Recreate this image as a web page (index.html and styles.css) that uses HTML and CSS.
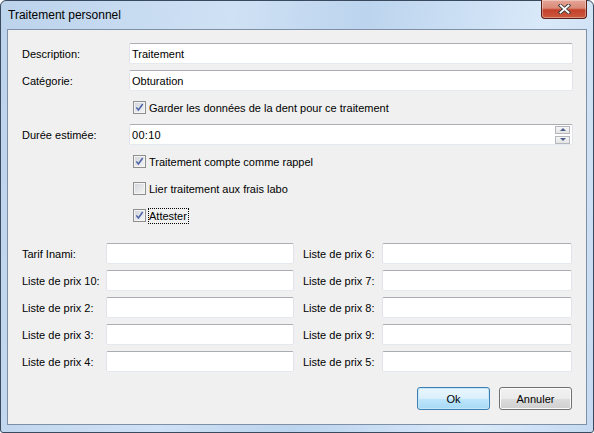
FILE: index.html
```html
<!DOCTYPE html>
<html lang="fr">
<head>
  <meta charset="UTF-8">
  <title>Traitement personnel</title>
  <link rel="stylesheet" href="styles.css">
</head>
<body>
  <div class="window">
    <div class="titlebar">
      <span class="title">Traitement personnel</span>
      <button class="close" type="button" aria-label="Fermer">
        <svg width="13" height="10" viewBox="0 0 13 10">
          <path d="M2.5 1.5 L10.5 8.5 M10.5 1.5 L2.5 8.5" stroke="#3b3b3b" stroke-width="3.6" stroke-linecap="square"/>
          <path d="M2.5 1.5 L10.5 8.5 M10.5 1.5 L2.5 8.5" stroke="#fff" stroke-width="1.8" stroke-linecap="square"/>
        </svg>
      </button>
    </div>

    <div class="client">
      <form class="form">
        <div class="main-grid">
          <label class="lbl">Description:</label>
          <input class="field" type="text" value="Traitement">

          <label class="lbl">Catégorie:</label>
          <input class="field" type="text" value="Obturation">

          <span></span>
          <label class="check"><span class="box on"></span>Garder les données de la dent pour ce traitement</label>

          <label class="lbl">Durée estimée:</label>
          <div class="spin">
            <input class="spin-input" type="text" value="00:10">
            <div class="spin-btns">
              <span class="spin-btn"><span class="arrow up"></span></span>
              <span class="spin-btn"><span class="arrow down"></span></span>
            </div>
          </div>

          <span></span>
          <label class="check"><span class="box on"></span>Traitement compte comme rappel</label>

          <span></span>
          <label class="check"><span class="box"></span>Lier traitement aux frais labo</label>

          <span></span>
          <label class="check"><span class="box on"></span><span class="focus">Attester</span></label>
        </div>

        <div class="price-grid">
          <label class="lbl">Tarif Inami:</label>
          <input class="field" type="text">
          <label class="lbl lbl-right">Liste de prix 6:</label>
          <input class="field" type="text">

          <label class="lbl">Liste de prix 10:</label>
          <input class="field" type="text">
          <label class="lbl lbl-right">Liste de prix 7:</label>
          <input class="field" type="text">

          <label class="lbl">Liste de prix 2:</label>
          <input class="field" type="text">
          <label class="lbl lbl-right">Liste de prix 8:</label>
          <input class="field" type="text">

          <label class="lbl">Liste de prix 3:</label>
          <input class="field" type="text">
          <label class="lbl lbl-right">Liste de prix 9:</label>
          <input class="field" type="text">

          <label class="lbl">Liste de prix 4:</label>
          <input class="field" type="text">
          <label class="lbl lbl-right">Liste de prix 5:</label>
          <input class="field" type="text">
        </div>

        <div class="actions">
          <button class="btn btn-default" type="submit">Ok</button>
          <button class="btn" type="button">Annuler</button>
        </div>
      </form>
    </div>
  </div>
</body>
</html>
```

FILE: styles.css
```css
body {
  margin: 0;
  background: #fff;
  font-family: "Liberation Sans", Arial, sans-serif;
  font-size: 11px;
  color: #000;
}

/* window frame */
.window {
  width: 594px;
  height: 433px;
  box-sizing: border-box;
  border: 1px solid #3a4a5e;
  border-radius: 6px 6px 3px 3px;
  background: linear-gradient(100deg, #bcd3ec 0%, #cfe1f4 35%, #bcd4ee 55%, #d9e9f9 82%, #c5daf1 100%);
  padding: 0 6px 7px 6px;
  display: flex;
  flex-direction: column;
}
.titlebar {
  height: 28px;
  display: flex;
  justify-content: space-between;
  align-items: flex-start;
}
.title {
  font-size: 12px;
  padding: 7px 0 0 1px;
  color: #000;
}
.close {
  width: 46px;
  height: 19px;
  margin: -1px 0 0 0;
  padding: 0;
  border: 1px solid #5a1f17;
  border-top: none;
  border-radius: 0 0 4px 4px;
  background: linear-gradient(#e6a597 0%, #d98a78 45%, #c4402a 55%, #cd5a3f 100%);
  box-shadow: inset 0 0 0 1px rgba(255, 255, 255, 0.35);
  display: flex;
  align-items: center;
  justify-content: center;
}

/* client area */
.client {
  flex: 1;
  border: 1px solid #7f90a6;
  background: #f0f0f0;
  padding: 13px 13px 0 14px;
}
.form {
  display: flex;
  flex-direction: column;
}
.main-grid {
  display: grid;
  grid-template-columns: 107px 1fr;
  grid-auto-rows: 21px;
  row-gap: 6px;
}
.lbl {
  align-self: center;
  white-space: nowrap;
}
.field, .spin {
  box-sizing: border-box;
  height: 21px;
  border: 1px solid;
  border-color: #abadb3 #e2e3ea #e3e9ef #e2e3ea;
  border-radius: 2px;
  background: #fff;
}
.field {
  width: 100%;
  padding: 0 2px;
  font: inherit;
  color: #000;
  outline: none;
}

/* spinner box */
.spin {
  display: flex;
  align-items: center;
}
.spin-input {
  flex: 1;
  border: none;
  outline: none;
  font: inherit;
  padding: 0 2px;
  letter-spacing: 0.3px;
  background: transparent;
}
.spin-btns {
  display: flex;
  flex-direction: column;
  gap: 2px;
  margin-right: 2px;
}
.spin-btn {
  box-sizing: border-box;
  width: 15px;
  height: 8px;
  border: 1px solid #b4b8bd;
  background: linear-gradient(#f6f6f6, #e4e4e4);
  display: flex;
  align-items: center;
  justify-content: center;
}
.arrow {
  width: 0;
  height: 0;
  border-left: 3px solid transparent;
  border-right: 3px solid transparent;
}
.arrow.up { border-bottom: 3px solid #4b5e8c; }
.arrow.down { border-top: 3px solid #4b5e8c; }

/* checkboxes */
.check {
  display: flex;
  align-items: center;
  gap: 3px;
  margin-left: 4px;
  white-space: nowrap;
}
.box {
  box-sizing: border-box;
  width: 13px;
  height: 13px;
  border: 1px solid #8e8f8f;
  background: linear-gradient(135deg, #cfd3d9, #f6f6f6);
  box-shadow: inset 0 0 0 1px #f4f4f4;
  flex: none;
}
.box.on {
  background:
    url("data:image/svg+xml,%3Csvg xmlns='http://www.w3.org/2000/svg' width='11' height='11'%3E%3Cpath d='M2.3 5.4 L4.4 8 L8.7 2' fill='none' stroke='%234b62a8' stroke-width='1.5'/%3E%3C/svg%3E") center / 11px 11px no-repeat,
    linear-gradient(135deg, #cfd3d9, #f6f6f6);
}
.focus {
  border: 1px dotted #000;
  margin-left: -1px;
  padding: 0 1px 0 0;
  line-height: 14px;
}

/* price lists */
.price-grid {
  display: grid;
  grid-template-columns: 84px 188px 88px 190px;
  grid-auto-rows: 21px;
  row-gap: 6px;
  margin-top: 17px;
}
.lbl-right {
  padding-left: 9px;
}

/* dialog buttons */
.actions {
  display: flex;
  justify-content: flex-end;
  gap: 9px;
  margin: 15px 1px 0 0;
}
.btn {
  width: 73px;
  height: 23px;
  font: inherit;
  color: #000;
  border: 1px solid #707070;
  border-radius: 3px;
  background: linear-gradient(#f2f2f2 0%, #ebebeb 50%, #dddddd 51%, #cfcfcf 100%);
  box-shadow: inset 0 0 0 1px #fcfcfc;
  padding: 0;
}
.btn-default {
  border-color: #3c7fb1;
  background: linear-gradient(#eaf6fd 0%, #d9f0fc 50%, #bee6fd 51%, #a7d9f5 100%);
  box-shadow: inset 0 0 0 1px #c6e7fa;
}
```
